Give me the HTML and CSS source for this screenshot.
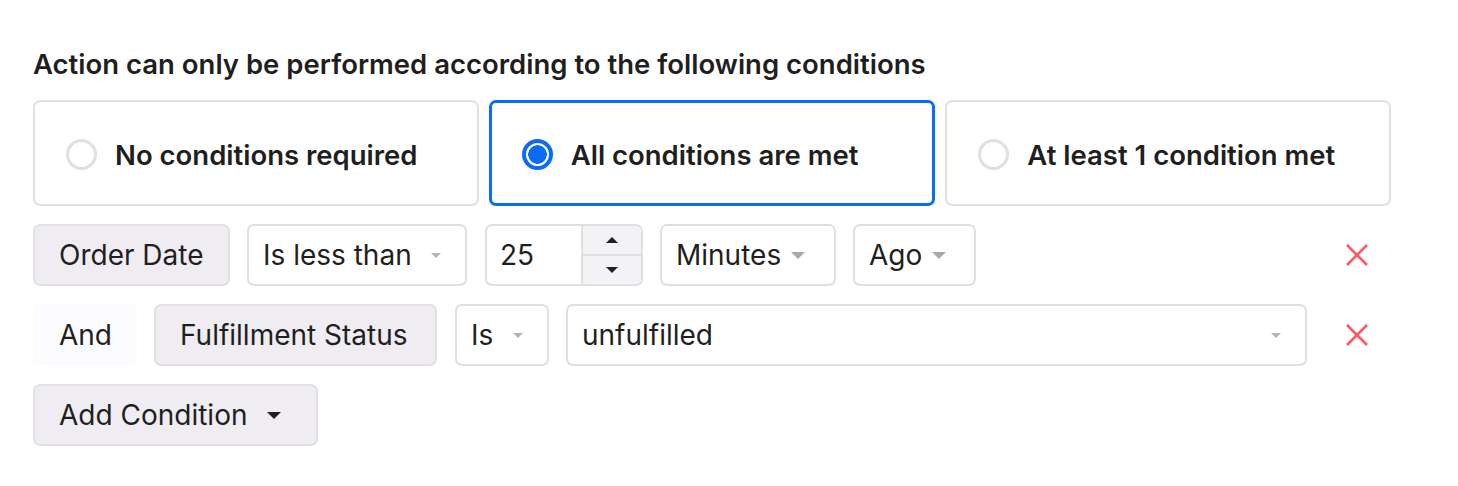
FILE: index.html
```html
<!DOCTYPE html>
<html>
<head>
<meta charset="utf-8">
<link rel="stylesheet" href="styles.css">
</head>
<body>
<div class="page">
  <h2 class="title">Action can only be performed according to the following conditions</h2>
  <div class="cards">
    <label class="card"><span class="radio"></span><span class="card-label">No conditions required</span></label>
    <label class="card active"><span class="radio checked"></span><span class="card-label">All conditions are met</span></label>
    <label class="card"><span class="radio"></span><span class="card-label">At least 1 condition met</span></label>
  </div>
  <div class="row">
    <div class="btn w-order">Order Date</div>
    <div class="select w-less">Is less than<span class="caret small"></span></div>
    <div class="number">
      <span class="num-val">25</span>
      <span class="spin"><span class="spin-up"><span class="tri up"></span></span><span class="spin-down"><span class="tri down"></span></span></span>
    </div>
    <div class="select w-min">Minutes<span class="caret"></span></div>
    <div class="select w-ago">Ago<span class="caret"></span></div>
    <div class="remove"><svg width="24" height="24" viewBox="0 0 24 24"><path d="M2 2 L22 22 M22 2 L2 22" stroke="#ff5a64" stroke-width="2.6" fill="none"/></svg></div>
  </div>
  <div class="row">
    <div class="and">And</div>
    <div class="btn w-ful">Fulfillment Status</div>
    <div class="select w-is">Is<span class="caret small"></span></div>
    <div class="select w-unf">unfulfilled<span class="caret small"></span></div>
    <div class="remove"><svg width="24" height="24" viewBox="0 0 24 24"><path d="M2 2 L22 22 M22 2 L2 22" stroke="#ff5a64" stroke-width="2.6" fill="none"/></svg></div>
  </div>
  <div class="row">
    <div class="btn w-add">Add Condition<span class="caret dark"></span></div>
  </div>
</div>
</body>
</html>
```
FILE: styles.css
```css
html, body { margin: 0; padding: 0; background: #fff; }
body { font-family: Inter, "Noto Sans", sans-serif; color: #1f1f22; }
.page { padding: 46px 0 0 33px; width: 1358px; }
.title { margin: 0 0 18px 0; font-size: 27.5px; font-weight: 600; line-height: 36px; letter-spacing: 0; }
.cards { display: flex; gap: 10px; margin-bottom: 18px; }
.card { flex: 1; height: 106px; box-sizing: border-box; border: 2px solid #e0dfe2; border-radius: 7px; display: flex; align-items: center; padding-left: 31px; padding-top: 3px; }
.card.active { border: 3px solid #0a6cf5; padding-left: 30px; }
.radio { width: 31px; height: 31px; box-sizing: border-box; border: 3px solid #e0dfe3; border-radius: 50%; margin-right: 18px; flex: none; }
.radio.checked { border: 4px solid #0a6cf5; background: radial-gradient(circle, #0a6cf5 0 9px, #fff 9.5px); }
.card-label { font-size: 27.5px; font-weight: 600; }
.row { display: flex; align-items: center; margin-bottom: 18px; height: 62px; font-size: 28px; }
.row > * { flex: none; margin-right: 17px; }
.btn { height: 62px; box-sizing: border-box; background: #efedf1; border: 2px solid #e2e0e4; border-radius: 7px; display: flex; align-items: center; padding: 0 24px; }
.select { height: 62px; box-sizing: border-box; background: #fff; border: 2px solid #e0dfe2; border-radius: 7px; display: flex; align-items: center; padding: 0 24px 0 14px; }
.caret { width: 0; height: 0; border-left: 7px solid transparent; border-right: 7px solid transparent; border-top: 7px solid #a9a8ac; margin-left: auto; }
.caret.small { border-left-width: 5px; border-right-width: 5px; border-top: 5px solid #b4b3b7; }
.caret.dark { border-left-width: 7px; border-right-width: 7px; border-top: 7px solid #1f1f22; margin-left: 20px; }
.w-order { width: 197px; }
.w-less { width: 220px; margin-right: 18px !important; }
.w-min { width: 176px; padding-right: 29px; }
.w-ago { width: 123px; padding-right: 28px; }
.w-ful { width: 283px; margin-right: 18px !important; }
.w-is { width: 94px; }
.w-unf { width: 741px; }
.w-add { width: 285px; }
.number { width: 158px; height: 62px; box-sizing: border-box; border: 2px solid #e0dfe2; border-radius: 7px; display: flex; overflow: hidden; }
.num-val { flex: 1; display: flex; align-items: center; padding-left: 13px; }
.spin { width: 58px; display: flex; flex-direction: column; border-left: 2px solid #e0dfe2; background: #f3f2f5; }
.spin-up, .spin-down { flex: 1; display: flex; align-items: center; justify-content: center; }
.spin-up { border-bottom: 2px solid #e0dfe2; }
.tri { width: 0; height: 0; border-left: 6px solid transparent; border-right: 6px solid transparent; }
.tri.up { border-bottom: 6px solid #1f1f22; }
.tri.down { border-top: 6px solid #1f1f22; }
.and { width: 104px; height: 62px; box-sizing: border-box; display: flex; align-items: center; padding-left: 26px; background: #fcfbfd; border-radius: 4px; }
.row > .remove { width: 24px; height: 24px; margin-left: auto; margin-right: 22px; display: flex; }
```
